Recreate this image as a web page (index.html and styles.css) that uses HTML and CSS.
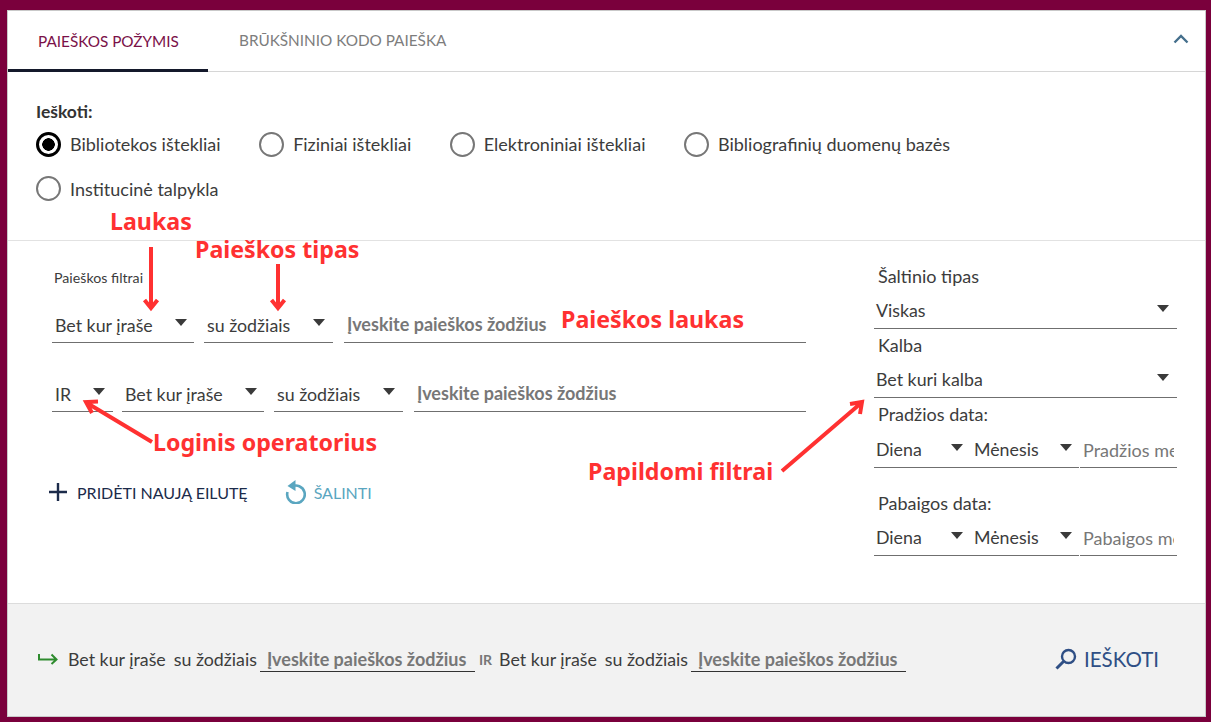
FILE: index.html
```html
<!DOCTYPE html>
<html lang="lt">
<head>
<meta charset="utf-8">
<title>Paieška</title>
<link rel="stylesheet" href="styles.css">
</head>
<body>
<main class="card">
  <nav class="tabs">
    <a class="tab tab-active">PAIEŠKOS POŽYMIS</a>
    <a class="tab">BRŪKŠNINIO KODO PAIEŠKA</a>
    <svg class="collapse" width="16" height="10" viewBox="0 0 16 10"><path d="M1.5 8.5 8 2l6.500 6.500" fill="none" stroke="#456f8c" stroke-width="2.400"/></svg>
  </nav>

  <section class="scope">
    <div class="scope-title">Ieškoti:</div>
    <div class="radios">
      <label class="radio"><i class="dot dot-on"></i>Bibliotekos ištekliai</label>
      <label class="radio"><i class="dot"></i>Fiziniai ištekliai</label>
      <label class="radio"><i class="dot"></i>Elektroniniai ištekliai</label>
      <label class="radio"><i class="dot"></i>Bibliografinių duomenų bazės</label>
      <label class="radio"><i class="dot"></i>Institucinė talpykla</label>
    </div>
  </section>

  <section class="form">
    <div class="filters">
      <div class="filters-title">Paieškos filtrai</div>
      <div class="row">
        <div class="select w-field"><span>Bet kur įraše</span></div>
        <div class="select w-type"><span>su žodžiais</span></div>
        <input class="term" placeholder="Įveskite paieškos žodžius">
      </div>
      <div class="row row-second">
        <div class="select w-op"><span>IR</span></div>
        <div class="select w-field"><span>Bet kur įraše</span></div>
        <div class="select w-type"><span>su žodžiais</span></div>
        <input class="term" placeholder="Įveskite paieškos žodžius">
      </div>
      <div class="actions">
        <button class="action action-add">
          <svg width="18" height="18" viewBox="0 0 18 18"><path d="M9 0v18M0 9h18" stroke="#1c2b4a" stroke-width="2.400"/></svg>
          PRIDĖTI NAUJĄ EILUTĘ
        </button>
        <button class="action action-clear">
          <svg width="21" height="24" viewBox="0 0 21 24"><path d="M6.500 6.800A8.800 8.800 0 1 1 2.500 12" fill="none" stroke="#5aa6c0" stroke-width="2.600"/><path d="M10.500 0v11L2.500 6z" fill="#5aa6c0"/></svg>
          ŠALINTI
        </button>
      </div>
    </div>

    <aside class="extra">
      <div class="extra-label label-first">Šaltinio tipas</div>
      <div class="select extra-select"><span>Viskas</span></div>
      <div class="extra-label">Kalba</div>
      <div class="select extra-select"><span>Bet kuri kalba</span></div>
      <div class="extra-label label-start">Pradžios data:</div>
      <div class="date">
        <div class="date-selects">
          <div class="select w-day"><span>Diena</span></div>
          <div class="select w-month"><span>Mėnesis</span></div>
        </div>
        <input class="year" placeholder="Pradžios metai">
      </div>
      <div class="extra-label label-end">Pabaigos data:</div>
      <div class="date">
        <div class="date-selects">
          <div class="select w-day"><span>Diena</span></div>
          <div class="select w-month"><span>Mėnesis</span></div>
        </div>
        <input class="year" placeholder="Pabaigos metai">
      </div>
    </aside>
  </section>

  <footer class="query">
    <svg class="query-arrow" width="20" height="12" viewBox="0 0 20 12"><path d="M1 1v5.500h17M13.500 1.500 18.500 6.500 13.500 11" fill="none" stroke="#2e8b2e" stroke-width="2"/></svg>
    <span class="q-text">Bet kur įraše</span>
    <span class="q-text">su žodžiais</span>
    <input class="q-input" placeholder="Įveskite paieškos žodžius">
    <span class="q-op">IR</span>
    <span class="q-text">Bet kur įraše</span>
    <span class="q-text">su žodžiais</span>
    <input class="q-input" placeholder="Įveskite paieškos žodžius">
    <button class="search">
      <svg width="22" height="22" viewBox="0 0 22 22"><circle cx="13.500" cy="8.500" r="6.500" fill="none" stroke="#2f4f85" stroke-width="2.400"/><path d="M8.500 13.500 1.500 20.500" stroke="#2f4f85" stroke-width="3"/></svg>
      IEŠKOTI
    </button>
  </footer>

  <div class="note n-laukas">Laukas</div>
  <div class="note n-tipas">Paieškos tipas</div>
  <div class="note n-paieska">Paieškos laukas</div>
  <div class="note n-logic">Loginis operatorius</div>
  <div class="note n-extra">Papildomi filtrai</div>
  <svg class="overlay" width="1211" height="722" viewBox="0 0 1211 722">
    <g fill="none" stroke="#ff3131" stroke-width="4">
      <path d="M151 247V306M144.500 300l6.500 8 6.500-8"/>
      <path d="M278 264V306M271.500 300l6.500 8 6.500-8"/>
      <path d="M152 442 87 403M98 401.500 86 402 92 413"/>
      <path d="M782 471 860 404M850 404 862 402 860 414"/>
    </g>
  </svg>
</main>
</body>
</html>
```
FILE: styles.css
```css
* { box-sizing: border-box; }
html, body { margin: 0; height: 100%; }
body {
  background: #7a003c;
  padding: 10px 5px 5px 7px;
  font-family: "Lato", "Noto Sans", sans-serif;
  font-size: 18px;
  color: #3c3c3c;
  overflow: hidden;
}
.card {
  position: relative;
  height: 707px;
  background: #fff;
  border: 1px solid #c9c9c9;
  display: flex;
  flex-direction: column;
}
.tabs {
  display: flex;
  align-items: flex-end;
  height: 61px;
  border-bottom: 1px solid #d6d6d6;
  flex: none;
}
.tab {
  height: 61px;
  font-size: 15.300px;
  line-height: 60px;
  color: #7d7d7d;
  padding: 0 31px;
  white-space: nowrap;
}
.tab-active {
  width: 200px;
  color: #7a1048;
  border-bottom: 3px solid #14192b;
  margin-bottom: -1px;
  height: 61px;
  padding: 0 0 0 30px;
}
.collapse { margin: 0 16px 27px auto; }

.scope {
  flex: none;
  height: 169px;
  padding: 29px 28px 0;
  border-bottom: 1px solid #e2e2e2;
}
.scope-title { font-weight: 700; font-size: 17.500px; line-height: 22px; color: #333; }
.radios {
  display: flex;
  flex-wrap: wrap;
  width: 1000px;
  margin-top: -1px;
}
.radio {
  display: flex;
  align-items: center;
  gap: 9px;
  height: 44.500px;
  line-height: 24px;
  margin-right: 38.500px;
  white-space: nowrap;
}
.dot {
  width: 25px;
  height: 25px;
  border: 2px solid #777;
  border-radius: 50%;
  background: #fff;
  flex: none;
}
.dot-on {
  border: 3px solid #000;
  background: radial-gradient(circle, #000 0 6px, #fff 6.500px);
}

.form {
  flex: 1;
  display: flex;
  justify-content: space-between;
  padding: 25px 28px 0 44px;
}
.filters { width: 754px; }
.filters-title { font-size: 14.200px; line-height: 22px; padding-left: 2px; color: #3c3c3c; margin-top: 1px; }
.row { display: flex; gap: 10px; margin-top: 17px; }
.row-second { margin-top: 32px; }
.select {
  position: relative;
  height: 37px;
  line-height: 38px;
  font-size: 17.800px;
  border-bottom: 1px solid #6f6f6f;
  padding-left: 3px;
  flex: none;
}
.select::after {
  content: "";
  position: absolute;
  right: 7px;
  top: 13px;
  border-left: 6.500px solid transparent;
  border-right: 6.500px solid transparent;
  border-top: 7px solid #3a3a3a;
}
.w-field { width: 142px; }
.w-type { width: 129px; }
.w-type::after { right: 8px; }
.w-op { width: 61px; margin-right: -1px; }
.w-op::after { right: 8px; }
input {
  font: inherit;
  color: inherit;
  border: 0;
  background: transparent;
  outline: 0;
  min-width: 0;
}
input::placeholder { color: #777; opacity: 1; }
.term {
  flex: 1;
  height: 37px;
  margin-left: 1px;
  padding: 0 3px;
  border-bottom: 1px solid #6f6f6f;
  font-weight: 700;
}
.actions { display: flex; align-items: center; gap: 37px; margin-top: 68px; margin-left: -3px; }
button {
  font: inherit;
  border: 0;
  background: none;
  padding: 0;
  display: flex;
  align-items: center;
}
.action-add { gap: 10px; color: #1c2b4a; font-size: 16px; }
.action-clear { gap: 8px; color: #5aa6c0; font-size: 16px; }

.extra { width: 303px; }
.extra-label { line-height: 20px; padding-left: 4px; height: 22px; margin-top: 6px; }
.label-first { margin-top: 0; }
.label-start { margin-top: 7px; line-height: 18px; }
.label-end { margin-top: 25px; }
.extra .select {
  height: 41px;
  padding: 5px 0 0 2px;
  line-height: 34px;
}
.extra .select::after { top: 17px; }
.extra-select { width: 100%; }
.extra-select::after { right: 8px; }
.date { display: flex; gap: 1px; }
.date-selects { display: flex; }
.w-day { width: 98px; }
.w-day::after { right: 9px; }
.w-month { width: 107px; }
.year {
  flex: 1;
  width: 0;
  height: 41px;
  padding: 5px 3px 0 3px;
  border-bottom: 1px solid #6f6f6f;
}

.query {
  flex: none;
  height: 113px;
  background: #f2f2f2;
  border-top: 1px solid #dcdcdc;
  display: flex;
  align-items: center;
  padding: 0 46px 2px 30px;
}
.query-arrow { margin-right: 10px; }
.q-text { font-size: 17.800px; line-height: 24px; margin-right: 8px; white-space: nowrap; }
.q-input {
  width: 215px;
  height: 26px;
  margin-left: -5px;
  padding: 0 7px;
  border-bottom: 1px solid #333;
  font-weight: 700;
}
.q-op { font-size: 14px; font-weight: 700; color: #777; margin: 0 7px 0 4px; }
.search { margin-left: auto; gap: 7px; color: #2f4f85; font-size: 20.500px; }

.note {
  position: absolute;
  font-family: "Noto Sans", sans-serif;
  font-weight: 700;
  font-size: 23.200px;
  line-height: 30px;
  color: #ff3131;
  white-space: nowrap;
}
.n-laukas { left: 102px; top: 195px; }
.n-tipas { left: 187px; top: 223px; }
.n-paieska { left: 553px; top: 293px; }
.n-logic { left: 145px; top: 416px; }
.n-extra { left: 580px; top: 445px; }
.overlay { position: absolute; left: -8px; top: -11px; pointer-events: none; }
```
